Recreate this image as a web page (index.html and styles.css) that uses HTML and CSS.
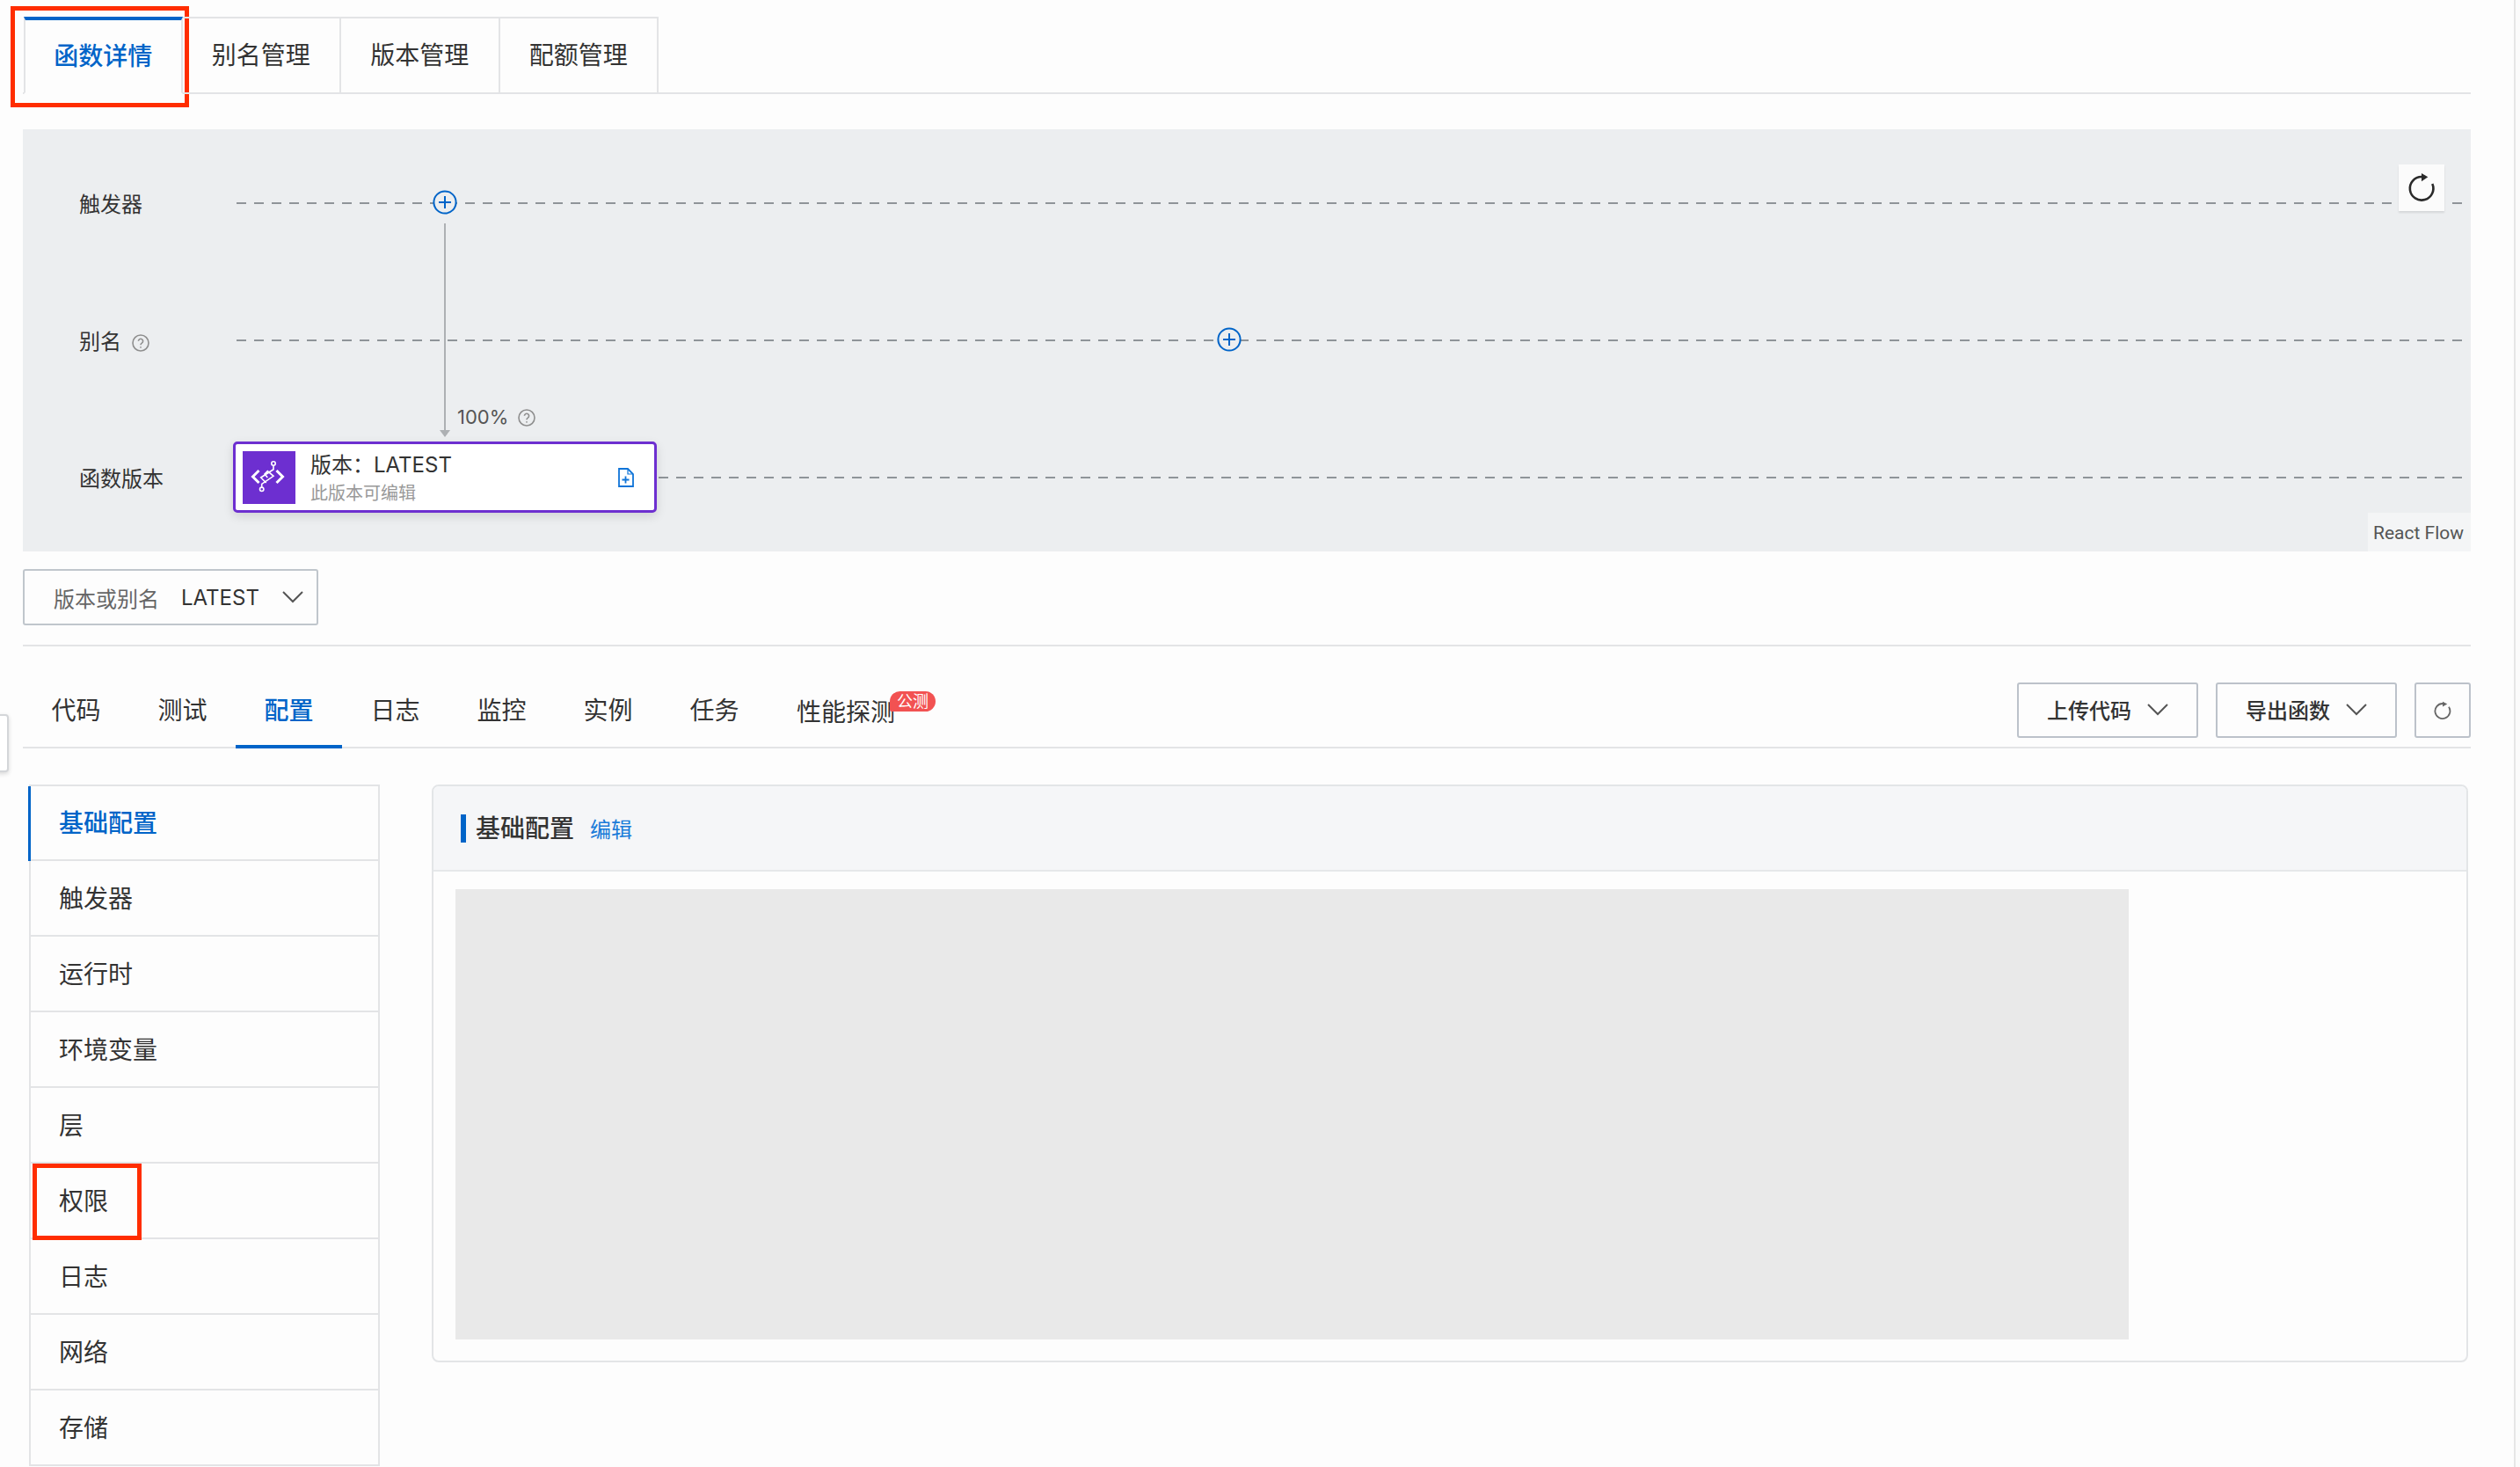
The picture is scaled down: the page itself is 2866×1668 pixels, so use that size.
FILE: index.html
```html
<!DOCTYPE html>
<html lang="zh-CN">
<head>
<meta charset="utf-8">
<title>函数详情</title>
<link rel="stylesheet" href="styles.css">
</head>
<body>
<div class="page">
  <main class="main">
    <nav class="top-tabs">
      <a class="top-tab active">函数详情<span class="mark mark-tab"></span></a>
      <a class="top-tab">别名管理</a>
      <a class="top-tab">版本管理</a>
      <a class="top-tab">配额管理</a>
    </nav>

    <section class="flow">
      <div class="lane lane-1"><span class="lane-label">触发器</span></div>
      <div class="lane lane-2"><span class="lane-label">别名<svg class="help help-alias" viewBox="0 0 20 20"><circle cx="10" cy="10" r="9"/><path d="M7.4 7.8a2.6 2.6 0 1 1 3.9 2.3c-.9.5-1.3 1-1.3 2.1"/><circle class="dot" cx="10" cy="14.8" r=".9"/></svg></span></div>
      <div class="lane lane-3"><span class="lane-label">函数版本</span></div>

      <svg class="plus plus-a" viewBox="0 0 28 28"><circle cx="14" cy="14" r="12.6"/><path d="M14 7v14M7 14h14"/></svg>
      <svg class="plus plus-b" viewBox="0 0 28 28"><circle cx="14" cy="14" r="12.6"/><path d="M14 7v14M7 14h14"/></svg>
      <div class="edge"></div>
      <div class="edge-label">100%<svg class="help" viewBox="0 0 20 20"><circle cx="10" cy="10" r="9"/><path d="M7.4 7.8a2.6 2.6 0 1 1 3.9 2.3c-.9.5-1.3 1-1.3 2.1"/><circle class="dot" cx="10" cy="14.8" r=".9"/></svg></div>

      <div class="node">
        <div class="node-icon">
          <svg viewBox="0 0 60 60"><path d="M18.5 22l-7 7 7 7M38.5 22l7 7-7 7" class="logo-bold"/><path d="M35 16.4v4.3L20.7 30l6 6M21.7 41v-3.7L35 28.3l-6.700-5.600-3.300 3.300 3.300 4" class="logo-thin"/><circle cx="35" cy="14" r="2.200" class="logo-thin"/><circle cx="21.700" cy="43.300" r="2.200" class="logo-thin"/></svg>
        </div>
        <div class="node-text">
          <div class="node-title">版本：LATEST</div>
          <div class="node-sub">此版本可编辑</div>
        </div>
        <svg class="file-add" viewBox="0 0 18 22"><path d="M1 1h10l6 6v14H1z"/><path d="M11 1v6h6" class="thin"/><path d="M8.500 9.500v8M4.500 13.500h8"/></svg>
      </div>

      <button class="flow-refresh"><svg viewBox="0 0 52 53"><path d="M26 14A13.300 13.300 0 1 0 38.300 22"/><path class="head" d="M26 10l7.300 4.300L26 19.300z"/></svg></button>
      <div class="attribution">React Flow</div>
    </section>

    <div class="selector">
      <span class="selector-label">版本或别名</span>
      <span class="selector-value">LATEST</span>
      <svg class="chev" viewBox="0 0 24 14"><path d="M1 1l11 11L23 1"/></svg>
    </div>

    <div class="rule"></div>

    <div class="sub-bar">
      <nav class="sub-tabs">
        <a class="sub-tab">代码</a>
        <a class="sub-tab">测试</a>
        <a class="sub-tab active">配置</a>
        <a class="sub-tab">日志</a>
        <a class="sub-tab">监控</a>
        <a class="sub-tab">实例</a>
        <a class="sub-tab">任务</a>
        <a class="sub-tab probe">性能探测<span class="badge">公测</span></a>
      </nav>
      <div class="actions">
        <button class="btn">上传代码<svg class="chev" viewBox="0 0 24 14"><path d="M1 1l11 11L23 1"/></svg></button>
        <button class="btn">导出函数<svg class="chev" viewBox="0 0 24 14"><path d="M1 1l11 11L23 1"/></svg></button>
        <button class="btn btn-icon"><svg viewBox="0 0 20 24"><path d="M10 4A8.500 8.500 0 1 0 17 7.800"/><path class="head" d="M10 1.800l5.300 2.800L10 7.400z"/></svg></button>
      </div>
    </div>

    <div class="config">
      <aside class="side">
        <a class="side-item active">基础配置</a>
        <a class="side-item">触发器</a>
        <a class="side-item">运行时</a>
        <a class="side-item">环境变量</a>
        <a class="side-item">层</a>
        <a class="side-item">权限<span class="mark mark-side"></span></a>
        <a class="side-item">日志</a>
        <a class="side-item">网络</a>
        <a class="side-item">存储</a>
      </aside>
      <section class="panel">
        <header class="panel-head">
          <h2 class="panel-title">基础配置</h2>
          <a class="panel-edit">编辑</a>
        </header>
        <div class="panel-body"><div class="redacted"></div></div>
      </section>
    </div>
  </main>
  <div class="rail"></div>
  <div class="handle"></div>
</div>
</body>
</html>
```

FILE: styles.css
```css
* { box-sizing: border-box; }
html, body { margin: 0; padding: 0; background: #fdfdfd; }
body { font-family: Inter, "Noto Sans CJK SC", sans-serif; color: #333; }
button { font-family: inherit; }
a { display: block; }

.page { position: relative; display: flex; width: 2866px; height: 1668px; overflow: hidden; }
.main { width: 2859px; padding: 19px 49px 0 26px; flex: none; }
.rail { flex: 1; border-left: 2px solid #e6e6e6; background: #fbfbfb; }
.handle { position: absolute; left: -6px; top: 812px; width: 16px; height: 66px; background: #fff; border: 2px solid #d4d6d9; border-radius: 4px; box-shadow: 0 2px 5px rgba(0,0,0,.15); }

/* top tabs */
.top-tabs { display: flex; height: 88px; padding-left: 1px; border-bottom: 2px solid #e3e4e6; }
.top-tab { position: relative; width: 180.5px; height: 88px; border: 2px solid #e3e4e6; border-left: 0; font-size: 28px; line-height: 85px; text-align: center; color: #333; }
.top-tab.active { color: #0064c8; font-weight: 500; border-top: 4px solid #0064c8; border-bottom: 2px solid #fdfdfd; border-left: 2px solid #e3e4e6; background: #fdfdfd; line-height: 82px; }
.mark { position: absolute; border: 5px solid #ff2d00; pointer-events: none; }
.mark-tab { left: -17px; top: -16px; width: 203px; height: 115px; }
.mark-side { left: 2px; top: 0; width: 124px; height: 87px; }

/* flow canvas */
.flow { position: relative; height: 480px; margin-top: 40px; background: #eceef0; }
.lane { position: absolute; left: 0; right: 0; height: 2px; }
.lane::after { content: ""; position: absolute; left: 243px; right: 10px; top: 0; height: 2px; background: repeating-linear-gradient(to right, #8f9499 0 11px, transparent 11px 20px); }
.lane-1 { top: 83px; }
.lane-2 { top: 239px; }
.lane-3 { top: 395px; }
.lane-label { position: absolute; left: 64px; top: -15px; font-size: 24px; line-height: 36px; color: #333; white-space: nowrap; }
.help { width: 20px; height: 20px; fill: none; stroke: #8e8e8e; stroke-width: 1.6; vertical-align: -3px; margin-left: 11px; }
.help-alias { margin-left: 12px; }
.help .dot { fill: #8e8e8e; stroke: none; }
.plus { position: absolute; width: 28px; height: 28px; fill: #eceef0; stroke: #0064c8; stroke-width: 2; z-index: 2; }
.plus-a { left: 466px; top: 69px; }
.plus-b { left: 1358px; top: 225px; }
.edge { position: absolute; left: 479px; top: 107px; width: 2px; height: 242px; background: #adb0b3; }
.edge::after { content: ""; position: absolute; left: -5px; bottom: -1px; border: 6px solid transparent; border-top: 8px solid #adb0b3; border-bottom: 0; }
.edge-label { position: absolute; left: 494px; top: 311px; font-size: 22px; line-height: 32px; color: #555; white-space: nowrap; }
.node { position: absolute; left: 239px; top: 355px; display: flex; align-items: center; width: 482px; height: 81px; padding-left: 8px; background: #fff; border: 3px solid #6d2fd0; border-radius: 5px; box-shadow: 0 4px 12px rgba(0,0,0,.12); z-index: 3; }
.node-icon { width: 60px; height: 60px; background: #6d2fd0; flex: none; }
.node-icon svg { display: block; width: 60px; height: 60px; fill: none; stroke: #fff; }
.logo-bold { stroke-width: 3; }
.logo-thin { stroke-width: 1.6; }
.node-text { margin-left: 17px; padding-top: 2px; flex: 1; }
.node-title { font-size: 24px; line-height: 34px; color: #333; white-space: nowrap; }
.node-sub { margin-top: 1px; font-size: 20px; line-height: 28px; color: #999; white-space: nowrap; }
.file-add { width: 18px; height: 22px; margin-right: 23px; fill: none; stroke: #0f74d8; stroke-width: 1.8; flex: none; }
.file-add .thin { stroke-width: 1.2; }
.flow-refresh { position: absolute; left: 2702px; top: 40px; width: 52px; height: 53px; padding: 0; border: 0; background: #fbfbfb; box-shadow: 0 2px 2px rgba(0,0,0,.1); z-index: 2; }
.flow-refresh svg { display: block; width: 52px; height: 53px; fill: none; stroke: #2a2a2a; stroke-width: 2.6; }
.flow-refresh .head { fill: #2a2a2a; stroke: none; }
.attribution { position: absolute; right: 0; bottom: 0; width: 117px; height: 44px; padding-left: 6px; background: #f4f5f6; font-family: Roboto, Inter, sans-serif; font-size: 21px; line-height: 46px; color: #555; white-space: nowrap; }

/* selector */
.selector { display: flex; align-items: center; width: 336px; height: 64px; margin-top: 20px; padding-left: 33px; border: 2px solid #c0c6cc; border-radius: 3px; font-size: 24px; white-space: nowrap; }
.selector-label { color: #666; }
.selector-value { margin-left: 25px; color: #333; }
.selector .chev { margin-left: 26px; }
.chev { width: 24px; height: 14px; fill: none; stroke: #555; stroke-width: 2; flex: none; }

.rule { height: 2px; margin-top: 22px; background: #e3e4e6; }

/* sub tabs */
.sub-bar { display: flex; justify-content: space-between; height: 116px; border-bottom: 2px solid #e3e4e6; }
.sub-tabs { display: flex; align-items: flex-end; }
.sub-tab { position: relative; width: 121px; height: 114px; padding-top: 52px; font-size: 28px; line-height: 42px; text-align: center; color: #333; }
.sub-tab.active { color: #0064c8; font-weight: 500; }
.sub-tab.active::after { content: ""; position: absolute; left: 0; right: 0; bottom: -2px; height: 4px; background: #0064c8; }
.sub-tab.probe { width: auto; padding: 54px 0 0 33px; }
.badge { position: absolute; left: 139px; top: 51px; width: 52px; height: 23px; background: #f25252; border-radius: 12px 12px 12px 2px; font-size: 18px; line-height: 23px; text-align: center; color: #fff; }
.actions { display: flex; gap: 20px; padding-top: 41px; }
.btn { display: flex; align-items: center; justify-content: center; gap: 18px; width: 206px; height: 63px; padding: 0 0 2px; background: transparent; border: 2px solid #bcc2ca; border-radius: 3px; font-size: 24px; font-weight: 500; color: #333; white-space: nowrap; }
.btn-icon { width: 64px; padding: 0; }
.btn-icon svg { width: 20px; height: 24px; fill: none; stroke: #666; stroke-width: 1.8; }
.btn-icon .head { fill: #666; stroke: none; }

/* config */
.config { display: flex; gap: 59px; margin-top: 41px; margin-left: 7px; }
.side { width: 399px; flex: none; border: 2px solid #e3e4e6; border-bottom: 0; }
.side-item { position: relative; height: 86px; padding-left: 32px; border-bottom: 2px solid #e3e4e6; font-size: 28px; line-height: 87px; color: #333; }
.side-item:first-child { height: 85px; }
.side-item.active { color: #0064c8; font-weight: 500; line-height: 84px; box-shadow: -3px 0 0 #0064c8; }
.panel { width: 2316px; height: 657px; border: 2px solid #e3e5e7; border-radius: 8px; }
.panel-head { display: flex; align-items: center; height: 97px; padding-left: 31px; background: #f5f6f8; border-bottom: 2px solid #e6e8ea; border-radius: 6px 6px 0 0; }
.panel-title { margin: 0; padding-left: 11px; border-left: 6px solid #0064c8; font-size: 28px; font-weight: 500; line-height: 32px; color: #333; }
.panel-edit { margin-left: 18px; font-size: 24px; color: #1a7bd9; }
.panel-body { padding: 20px 0 0 25px; }
.redacted { width: 1903px; height: 512px; background: #e9e9e9; }
```
